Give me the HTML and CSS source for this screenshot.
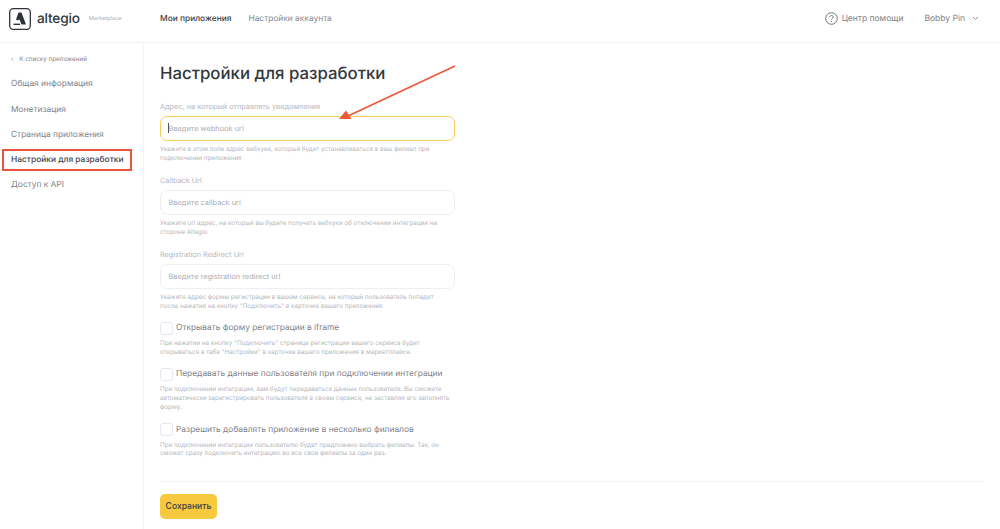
FILE: index.html
```html
<!DOCTYPE html>
<html lang="ru">
<head>
    <meta charset="UTF-8">
    <title>Настройки для разработки</title>
    <link rel="stylesheet" href="styles.css">
</head>
<body>
    <header class="topbar">
        <div class="logo">
            <svg class="logo-mark" width="22" height="22" viewBox="0 0 22 22">
                <rect x="0.7" y="0.7" width="20.6" height="20.6" rx="3.5" fill="none" stroke="#2f3338" stroke-width="1.3"/>
                <path d="M9.5 4.5 L12.5 4.5 L17 16.5 L12.5 16.5 L10.5 11.5 L8.5 12.5 L7 11.5 Z" fill="#2f3338"/>
                <path d="M4.5 15.6 H11 V17 H4.5 Z" fill="#2f3338"/>
            </svg>
            <span class="logo-name">altegio</span>
            <span class="logo-sub">Marketplace</span>
        </div>
        <nav class="topnav">
            <a class="topnav-item active">Мои приложения</a>
            <a class="topnav-item">Настройки аккаунта</a>
        </nav>
        <div class="topbar-right">
            <a class="help">
                <svg width="13" height="13" viewBox="0 0 13 13" fill="none" stroke="#6f747c" stroke-width="1">
                    <circle cx="6.5" cy="6.5" r="5.8"/>
                    <path d="M4.8 5.2 C4.8 3 8.2 3 8.2 5.1 C8.2 6.3 6.5 6.3 6.5 7.7"/>
                    <path d="M6.5 9 V9.9"/>
                </svg>
                Центр помощи
            </a>
            <a class="user">
                Bobby Pin
                <svg width="7" height="5" viewBox="0 0 7 5" fill="none" stroke="#8a8f96" stroke-width="1"><path d="M1 1 L3.5 3.5 L6 1"/></svg>
            </a>
        </div>
    </header>

    <div class="layout">
        <aside class="sidebar">
            <a class="back"><span class="back-arrow">‹</span> К списку приложений</a>
            <ul class="side-menu">
                <li>Общая информация</li>
                <li>Монетизация</li>
                <li>Страница приложения</li>
                <li class="current">Настройки для разработки</li>
                <li>Доступ к API</li>
            </ul>
        </aside>

        <main class="content">
            <h1>Настройки для разработки</h1>
            <form class="form">
                <div class="field">
                    <label>Адрес, на который отправлять уведомления</label>
                    <div class="input focused"><i class="caret"></i>Введите webhook url</div>
                    <p class="hint">Укажите в этом поле адрес вебхука, который будет устанавливаться в ваш филиал при подключении приложения</p>
                </div>
                <div class="field">
                    <label>Callback Url</label>
                    <div class="input">Введите callback url</div>
                    <p class="hint">Укажите url адрес, на который вы будете получать вебхуки об отключении интеграции на стороне Altegio</p>
                </div>
                <div class="field">
                    <label>Registration Redirect Url</label>
                    <div class="input">Введите registration redirect url</div>
                    <p class="hint">Укажите адрес формы регистрации в вашем сервисе, на который пользователь попадет после нажатия на кнопку "Подключить" в карточке вашего приложения</p>
                </div>
                <div class="check">
                    <div class="check-row"><span class="box"></span>Открывать форму регистрации в iframe</div>
                    <p class="hint">При нажатии на кнопку "Подключить" страница регистрации вашего сервиса будет открываться в табе "Настройки" в карточке вашего приложения в маркетплейсе.</p>
                </div>
                <div class="check">
                    <div class="check-row"><span class="box"></span>Передавать данные пользователя при подключении интеграции</div>
                    <p class="hint">При подключении интеграции, вам будут передаваться данные пользователя. Вы сможете автоматически зарегистрировать пользователя в своем сервисе, не заставляя его заполнять форму.</p>
                </div>
                <div class="check">
                    <div class="check-row"><span class="box"></span>Разрешить добавлять приложение в несколько филиалов</div>
                    <p class="hint">При подключении интеграции пользователю будет предложено выбрать филиалы. Так, он сможет сразу подключить интеграцию во все свои филиалы за один раз.</p>
                </div>
            </form>
            <div class="actions">
                <button class="save" type="button">Сохранить</button>
            </div>
        </main>
    </div>

    <!-- пометки поверх скриншота -->
    <div class="mark-rect"></div>
    <svg class="mark-arrow" width="120" height="60" viewBox="0 0 120 60">
        <path d="M116 2 L9 52" stroke="#ee5a3a" stroke-width="1.8" fill="none"/>
        <path d="M0 55 L7 46.5 L12.5 55 Z" fill="#ee5a3a"/>
    </svg>
</body>
</html>
```

FILE: styles.css
```css
* {
    box-sizing: border-box;
}

html, body {
    height: 100%;
}

body {
    margin: 0;
    font-family: Inter, "Noto Sans", sans-serif;
    text-rendering: geometricPrecision;
    background-color: white;
    color: #2f3338;
    overflow: hidden;
}

.topbar {
    display: flex;
    align-items: center;
    height: 43px;
    padding: 0 21px 5px 9px;
    border-bottom: 1px solid #f2f2f4;
}

.logo {
    display: flex;
    align-items: center;
    width: 151px;
}

.logo-mark {
    margin-right: 6px;
}

.logo-name {
    font-size: 13.7px;
    font-weight: 500;
    letter-spacing: -0.2px;
    color: #33373c;
}

.logo-sub {
    margin-left: 9px;
    font-size: 5.6px;
    color: #a9adb3;
}

.topnav {
    display: flex;
    gap: 17px;
}

.topnav-item {
    font-size: 8.4px;
    color: #83878e;
}

.topnav-item.active {
    font-weight: 500;
    color: #3a3e44;
}

.topbar-right {
    display: flex;
    align-items: center;
    margin-left: auto;
    font-size: 8.5px;
    color: #7d8189;
}

.help {
    display: flex;
    align-items: center;
    gap: 4px;
}

.user {
    display: flex;
    align-items: center;
    gap: 7px;
    margin-left: 21px;
}

.layout {
    display: flex;
    height: 486px;
}

.sidebar {
    width: 144px;
    flex-shrink: 0;
    padding: 11px 0 0 11px;
    border-right: 1px solid #f2f2f4;
}

.back {
    display: block;
    font-size: 6.3px;
    line-height: 10px;
    color: #83878e;
}

.back-arrow {
    margin-right: 4px;
}

.side-menu {
    list-style: none;
    margin: 8.4px 0 0;
    padding: 0;
    font-size: 8.4px;
    color: #7d8189;
}

.side-menu li {
    height: 25.2px;
    line-height: 25px;
}

.side-menu .current {
    font-weight: 500;
    color: #3f434a;
}

.content {
    flex: 1;
    padding: 19px 16px 0;
}

h1 {
    margin: 0;
    font-size: 16.8px;
    font-weight: 500;
    line-height: 24px;
    color: #33373c;
}

.form {
    width: 295px;
    margin-top: 13px;
}

.field {
    margin-bottom: 10.6px;
}

.field label {
    display: block;
    font-size: 7.3px;
    line-height: 15px;
    color: #b4b7bd;
    margin-bottom: 2px;
}

.input {
    position: relative;
    height: 25px;
    padding: 0 7.5px;
    border: 1px solid #eeeef6;
    border-radius: 7px;
    font-size: 7.4px;
    line-height: 23px;
    color: #a9adb3;
}

.input.focused {
    border: 1.5px solid #f8cf55;
}

.caret {
    position: absolute;
    left: 7px;
    top: 6px;
    width: 1px;
    height: 10px;
    background-color: #555;
}

.hint {
    margin: 4px 0 0;
    font-size: 6.25px;
    line-height: 8.7px;
    color: #b4b7bd;
}

.field .hint {
    max-width: 285px;
}

.check {
    margin-bottom: 11px;
}

.field + .check {
    margin-top: 2px;
}

.check-row {
    display: flex;
    align-items: center;
    gap: 3px;
    font-size: 8.4px;
    line-height: 14px;
    white-space: nowrap;
    color: #7d8189;
}

.box {
    width: 13px;
    height: 13px;
    border: 1px solid #e6e6f2;
    border-radius: 3px;
}

.actions {
    margin-top: 23px;
    padding-top: 12px;
    border-top: 1px solid #f2f2f4;
}

.save {
    display: block;
    width: 57px;
    height: 25px;
    padding: 0;
    border: none;
    border-radius: 5px;
    background-color: #f7c93e;
    font-family: inherit;
    font-size: 8.6px;
    font-weight: 500;
    color: #3a3e44;
}

.mark-rect {
    position: absolute;
    left: 2px;
    top: 149px;
    width: 130px;
    height: 22px;
    border: 2px solid #ec5338;
}

.mark-arrow {
    position: absolute;
    left: 339px;
    top: 64px;
}
```
